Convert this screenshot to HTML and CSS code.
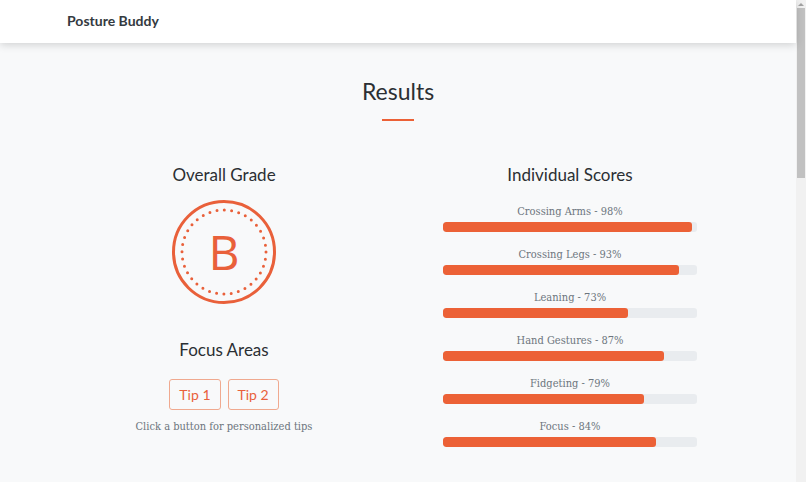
FILE: index.html
```html
<!DOCTYPE html>
<html lang="en">
<head>
<meta charset="utf-8">
<title>Posture Buddy</title>
<link rel="stylesheet" href="styles.css">
</head>
<body>
<div class="viewport">
  <div class="content">
    <header class="navbar">
      <a class="brand" href="#">Posture Buddy</a>
    </header>
    <main class="page">
      <h1 class="title">Results</h1>
      <div class="title-rule"></div>
      <div class="results">
        <section class="col-left">
          <h2 class="section-title">Overall Grade</h2>
          <div class="grade">
            <svg class="grade-ring" width="104" height="104" viewBox="0 0 104 104" aria-hidden="true">
              <circle cx="52" cy="52" r="50.5" fill="none" stroke="#e9603a" stroke-width="3"/>
              <circle cx="52" cy="52" r="42" fill="none" stroke="#e9603a" stroke-width="3" stroke-linecap="round" stroke-dasharray="0 7.33"/>
            </svg>
            <span class="grade-letter">B</span>
          </div>
          <h2 class="section-title focus-title">Focus Areas</h2>
          <div class="tips">
            <button class="tip-btn">Tip 1</button>
            <button class="tip-btn">Tip 2</button>
          </div>
          <p class="hint">Click a button for personalized tips</p>
        </section>
        <section class="col-right">
          <h2 class="section-title">Individual Scores</h2>
          <div class="scores">
            <div class="score">
              <div class="score-label">Crossing Arms - 98%</div>
              <div class="bar"><div class="bar-fill" style="width:98%"></div></div>
            </div>
            <div class="score">
              <div class="score-label">Crossing Legs - 93%</div>
              <div class="bar"><div class="bar-fill" style="width:93%"></div></div>
            </div>
            <div class="score">
              <div class="score-label">Leaning - 73%</div>
              <div class="bar"><div class="bar-fill" style="width:73%"></div></div>
            </div>
            <div class="score">
              <div class="score-label">Hand Gestures - 87%</div>
              <div class="bar"><div class="bar-fill" style="width:87%"></div></div>
            </div>
            <div class="score">
              <div class="score-label">Fidgeting - 79%</div>
              <div class="bar"><div class="bar-fill" style="width:79%"></div></div>
            </div>
            <div class="score">
              <div class="score-label">Focus - 84%</div>
              <div class="bar"><div class="bar-fill" style="width:84%"></div></div>
            </div>
          </div>
        </section>
      </div>
    </main>
  </div>
  <div class="scrollbar" aria-hidden="true">
    <div class="scroll-arrow"></div>
    <div class="scroll-thumb"></div>
  </div>
</div>
</body>
</html>
```
FILE: styles.css
```css
html, body {
  margin: 0;
  padding: 0;
  height: 100%;
  overflow: hidden;
}
body {
  background: #f8f9fa;
  color: #343a40;
  font-family: Lato, "Open Sans", sans-serif;
}
.viewport {
  display: flex;
  height: 100%;
}
.content {
  flex: 1;
  min-width: 0;
}
.scrollbar {
  width: 10px;
  flex: none;
  background: #f1f1f1;
  display: flex;
  flex-direction: column;
  align-items: center;
  padding-top: 3px;
  box-sizing: border-box;
}
.scroll-arrow {
  width: 0;
  height: 0;
  border-left: 3px solid transparent;
  border-right: 3px solid transparent;
  border-bottom: 3px solid #a3a3a3;
}
.scroll-thumb {
  width: 8px;
  height: 170px;
  margin-top: 2px;
  background: #c1c1c1;
}
.navbar {
  position: relative;
  z-index: 2;
  height: 43px;
  background: #ffffff;
  box-shadow: 0 2px 8px rgba(0, 0, 0, 0.16);
  display: flex;
  align-items: center;
  padding-left: 67px;
  box-sizing: border-box;
}
.brand {
  font-family: Lato, "Open Sans", sans-serif;
  font-weight: 700;
  font-size: 14px;
  color: #343a40;
  text-decoration: none;
  line-height: 1;
  margin-top: -2px;
}
.page {
  padding-top: 35px;
}
.title {
  margin: 0;
  text-align: center;
  font-size: 23px;
  font-weight: 400;
  line-height: 26px;
  color: #2b2f33;
}
.title-rule {
  width: 32px;
  height: 2px;
  background: #ec6136;
  margin: 15px auto 0;
}
.results {
  display: grid;
  grid-template-columns: 300px 254px;
  column-gap: 69px;
  margin-left: 74px;
  margin-top: 44px;
}
.col-left, .col-right {
  display: flex;
  flex-direction: column;
  align-items: center;
}
.section-title {
  margin: 0;
  font-size: 17px;
  font-weight: 400;
  line-height: 20px;
  color: #2b2f33;
}
.grade {
  position: relative;
  width: 104px;
  height: 104px;
  margin-top: 15px;
}
.grade-ring {
  display: block;
}
.grade-letter {
  position: absolute;
  inset: 0;
  display: flex;
  align-items: center;
  justify-content: center;
  font-family: "Open Sans", sans-serif;
  font-size: 48px;
  line-height: 1;
  color: #e9603a;
  padding-bottom: 1px;
}
.focus-title {
  margin-top: 36px;
}
.tips {
  display: flex;
  gap: 7px;
  margin-top: 19px;
}
.tip-btn {
  font-family: Lato, "Open Sans", sans-serif;
  font-size: 14px;
  color: #e9603a;
  background: transparent;
  border: 1px solid #f0a98f;
  border-radius: 3px;
  height: 31px;
  padding: 0 9px;
  cursor: pointer;
}
.hint {
  margin: 8px 0 0;
  font-family: "DejaVu Serif", serif;
  font-stretch: condensed;
  font-size: 11px;
  line-height: 18px;
  color: #6c757d;
}
.scores {
  width: 254px;
  margin-top: 18px;
  display: flex;
  flex-direction: column;
  gap: 14px;
}
.score-label {
  text-align: center;
  font-family: "DejaVu Serif", serif;
  font-stretch: condensed;
  font-size: 11px;
  line-height: 18px;
  color: #6c757d;
}
.bar {
  margin-top: 1px;
  height: 10px;
  background: #e9ecef;
  border-radius: 3px;
  overflow: hidden;
}
.bar-fill {
  height: 100%;
  background: #ec6136;
  border-radius: 3px;
}
```
